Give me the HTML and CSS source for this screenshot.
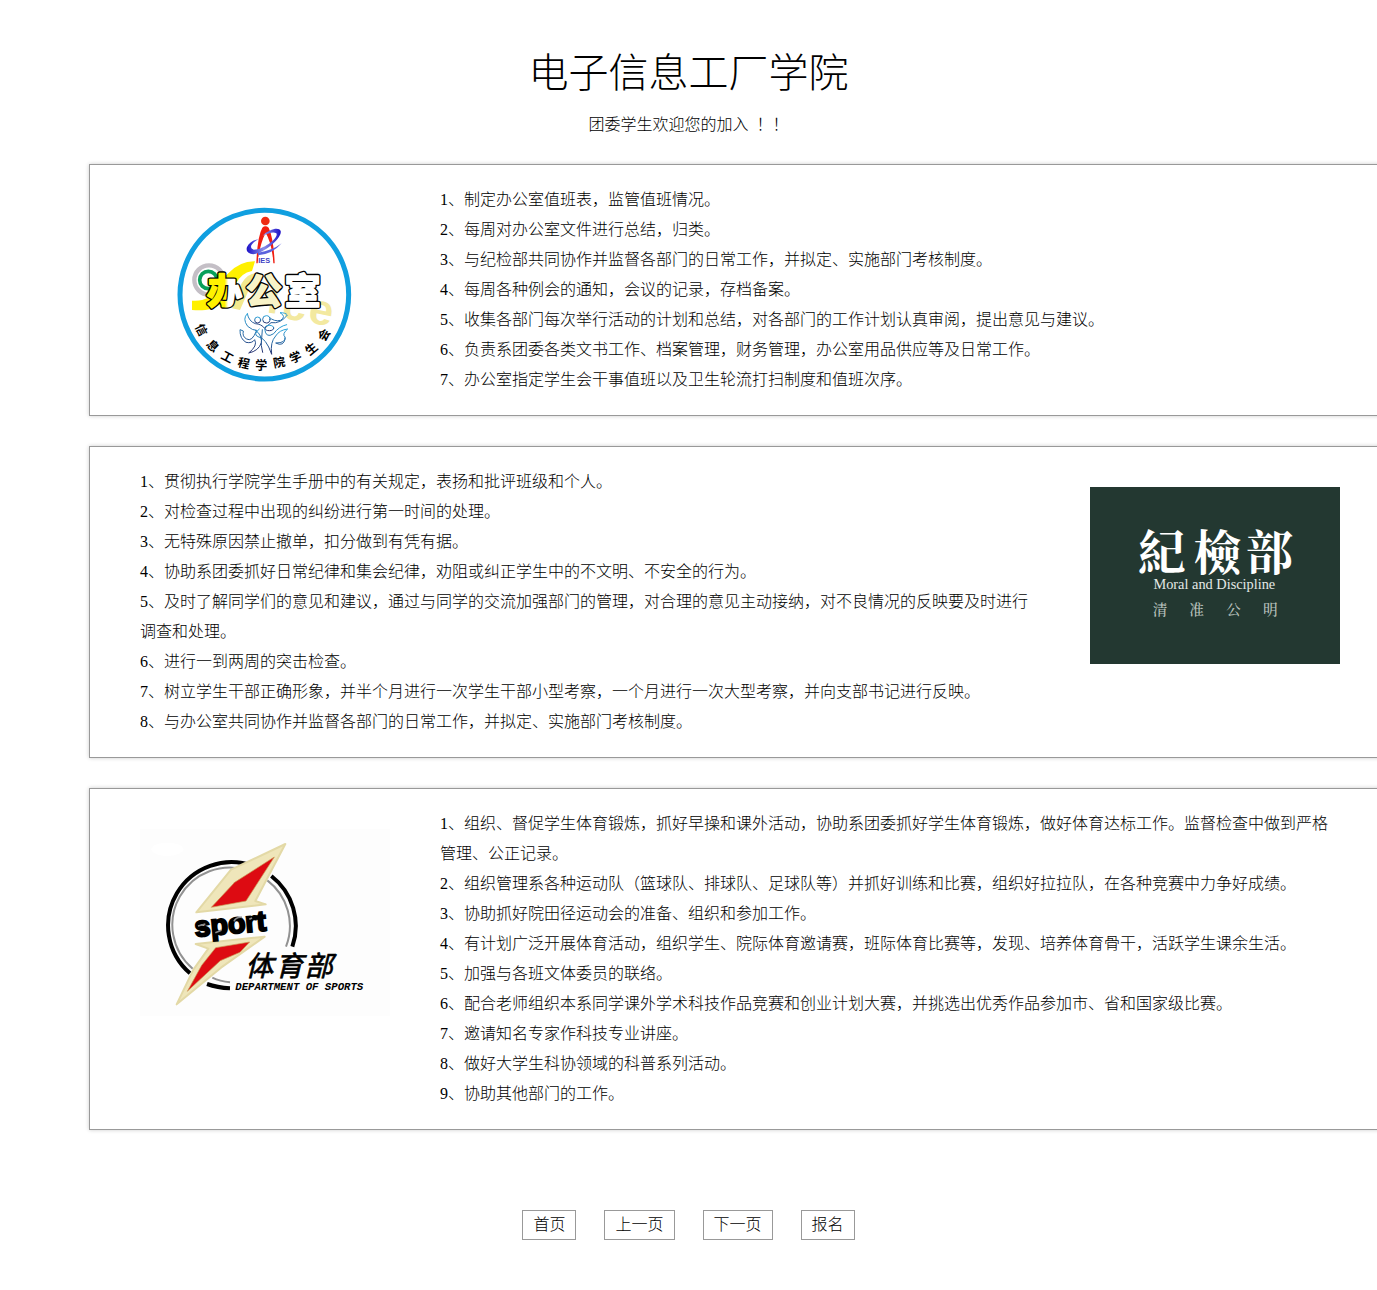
FILE: index.html
```html
<!DOCTYPE html>
<html lang="zh-CN">
<head>
    <meta charset="UTF-8">
    <meta name="viewport" content="width=device-width, initial-scale=1.0">
    <title>电子信息工厂学院</title>
    <link rel="stylesheet" href="styles.css">
</head>
<body>
    <header class="header">
        <h1>电子信息工厂学院</h1>
        <p>团委学生欢迎您的加入&nbsp; ！！</p>
    </header>

    <main class="main">
        <section class="box">
            <svg class="logo" viewBox="-60 30 750 570" role="img" aria-label="办公室">
                <defs>
                    <linearGradient id="ban" x1="0" x2="1">
                        <stop offset="0.5" stop-color="#fff200"/>
                        <stop offset="0.6" stop-color="#ffffff"/>
                    </linearGradient>
                    <linearGradient id="people" x1="0" y1="0" x2="0" y2="1">
                        <stop offset="0" stop-color="#2aa5dc"/>
                        <stop offset="1" stop-color="#26306f"/>
                    </linearGradient>
                    <linearGradient id="orbit" x1="0" x2="1">
                        <stop offset="0" stop-color="#1c10c8"/>
                        <stop offset="0.5" stop-color="#8b8fe8"/>
                        <stop offset="1" stop-color="#1c10c8"/>
                    </linearGradient>
                </defs>
                <circle cx="313" cy="299" r="253" fill="#fff" stroke="#109fe0" stroke-width="15"/>
                <!-- Office -->
                <path d="M96 317C170 322 165 270 205 235Q240 198 285 199L276 228Q243 233 225 270C200 325 165 352 96 345Z" fill="#fff000"/>
                <path d="M245 265Q268 225 308 236L302 256Q278 252 266 286L240 345L216 340Z" fill="#f3e98e"/>
                <g class="office">
                    <text x="318" y="352" transform="rotate(8 318 352)">i</text>
                    <text x="362" y="368" transform="rotate(10 362 368)">c</text>
                    <text x="440" y="380" transform="rotate(12 440 380)">e</text>
                </g>
                <circle cx="147" cy="255" r="44" fill="none" stroke="#c4bfc6" stroke-width="13"/>
                <circle cx="145" cy="255" r="26" fill="none" stroke="#08a05a" stroke-width="11"/>
                <!-- IES -->
                <circle cx="316" cy="78" r="13" fill="#ee2a12"/>
                <path d="M289 205Q292 125 307 98Q316 90 326 98Q341 130 344 205H340Q336 145 317 113Q298 150 293 205Z" fill="#f01d10"/>
                <path d="M308 122C330 101 357 96 362 108C366 125 329 161 293 175C275 182 255 174 261 156C267 143 280 135 295 133C273 145 266 158 281 164C310 165 358 128 349 115C342 109 327 113 308 122Z" fill="url(#orbit)"/>
                <path d="M294 173Q337 167 365 145Q337 178 294 181Z" fill="#5a62dd"/>
                <rect x="294" y="187" width="44" height="18" fill="#fff"/>
                <text class="ies" x="295" y="204">IES</text>
                <g class="office-name">
                    <g class="edge">
                        <text x="141" y="328">办</text>
                        <text x="259" y="328">公</text>
                        <text x="375" y="328">室</text>
                    </g>
                    <g class="face">
                        <text x="141" y="328" fill="url(#ban)" stroke="url(#ban)">办</text>
                        <text x="259" y="328" fill="#f8f3c8" stroke="#f8f3c8">公</text>
                        <text x="375" y="328" fill="#fff" stroke="#fff">室</text>
                    </g>
                </g>
                <g fill="none" stroke="url(#people)" stroke-width="3" stroke-linecap="round" stroke-linejoin="round">
                    <path d="M262 356Q246 371 263 394Q279 407 290 406Q276 442 260 432Q246 425 250 408L240 404Q239 431 258 442Q276 446 284 434Q294 452 266 474Q296 468 304 443L307 404"/>
                    <path d="M262 356Q266 379 286 386Q304 387 314 400L333 383Q362 387 382 360Q377 353 360 353Q380 364 362 376Q343 381 328 367"/>
                    <circle cx="293" cy="375" r="9"/>
                    <circle cx="319" cy="373" r="11"/>
                    <ellipse cx="328" cy="399" rx="13" ry="8"/>
                    <path d="M298 402Q278 418 294 425Q318 428 335 478Q330 441 347 423Q358 405 383 402Q365 417 375 426Q378 444 347 444Q372 457 376 429"/>
                    <path d="M286 406Q308 418 304 452L308 472M314 402Q317 432 341 416Q357 394 380 389"/>
                </g>
                <g class="ring-text">
                    <text transform="translate(127 403) rotate(63)">信</text>
                    <text transform="translate(161 450) rotate(45)">息</text>
                    <text transform="translate(204 483) rotate(28)">工</text>
                    <text transform="translate(252 501) rotate(12)">程</text>
                    <text transform="translate(304 507)">学</text>
                    <text transform="translate(357 499) rotate(-10)">院</text>
                    <text transform="translate(405 484) rotate(-24)">学</text>
                    <text transform="translate(452 459) rotate(-40)">生</text>
                    <text transform="translate(489 418) rotate(-58)">会</text>
                </g>
            </svg>
            <div class="text">
                <p>1、制定办公室值班表，监管值班情况。</p>
                <p>2、每周对办公室文件进行总结，归类。</p>
                <p>3、与纪检部共同协作并监督各部门的日常工作，并拟定、实施部门考核制度。</p>
                <p>4、每周各种例会的通知，会议的记录，存档备案。</p>
                <p>5、收集各部门每次举行活动的计划和总结，对各部门的工作计划认真审阅，提出意见与建议。</p>
                <p>6、负责系团委各类文书工作、档案管理，财务管理，办公室用品供应等及日常工作。</p>
                <p>7、办公室指定学生会干事值班以及卫生轮流打扫制度和值班次序。</p>
            </div>
        </section>

        <section class="box">
            <div class="text">
                <p>1、贯彻执行学院学生手册中的有关规定，表扬和批评班级和个人。</p>
                <p>2、对检查过程中出现的纠纷进行第一时间的处理。</p>
                <p>3、无特殊原因禁止撤单，扣分做到有凭有据。</p>
                <p>4、协助系团委抓好日常纪律和集会纪律，劝阻或纠正学生中的不文明、不安全的行为。</p>
                <p>5、及时了解同学们的意见和建议，通过与同学的交流加强部门的管理，对合理的意见主动接纳，对不良情况的反映要及时进行调查和处理。</p>
                <p>6、进行一到两周的突击检查。</p>
                <p>7、树立学生干部正确形象，并半个月进行一次学生干部小型考察，一个月进行一次大型考察，并向支部书记进行反映。</p>
                <p>8、与办公室共同协作并监督各部门的日常工作，并拟定、实施部门考核制度。</p>
            </div>
            <svg class="logo" viewBox="30 21 750 531" role="img" aria-label="紀檢部">
                <rect x="30" y="21" width="750" height="531" fill="#233831"/>
                <g class="moral-name">
                    <text x="246" y="270">紀</text>
                    <text x="412" y="270">檢</text>
                    <text x="568" y="270">部</text>
                </g>
                <text class="moral-en" x="403" y="328">Moral and Discipline</text>
                <g class="moral-motto">
                    <text x="240" y="405">清</text>
                    <text x="350" y="405">准</text>
                    <text x="461" y="405">公</text>
                    <text x="571" y="405">明</text>
                </g>
            </svg>
        </section>

        <section class="box">
            <svg class="logo" viewBox="30 27 750 561" role="img" aria-label="体育部">
                <rect x="30" y="27" width="750" height="561" fill="#fdfdfd"/>
                <ellipse cx="112" cy="88" rx="48" ry="20" fill="#fff"/>
                <path d="M370 138A190 190 0 0 0 180 460M231 492Q262 503 300 505M424 168A190 190 0 0 1 487 380" fill="none" stroke="#000" stroke-width="12"/>
                <path d="M355 152A172 172 0 0 0 188 446M247 473Q270 484 300 487M412 181A172 172 0 0 1 468 380" fill="none" stroke="#929292" stroke-width="6"/>
                <path d="M466 72L376 243L407 253L199 277L303 149Z" fill="#efe6ba" stroke="#e3d9a6" stroke-width="6" stroke-linejoin="round"/>
                <path d="M433 111L348 243L244 262L314 187Z" fill="#dd0b12" stroke="#c99a55" stroke-width="2"/>
                <path d="M197 372L404 350L273 443L140 553L190 449L235 386Z" fill="#efe6ba" stroke="#e3d9a6" stroke-width="6" stroke-linejoin="round"/>
                <path d="M359 366L257 383L215 436L172 514L271 422L330 397Z" fill="#dd0b12" stroke="#c99a55" stroke-width="2"/>
                <text class="sport" x="196" y="350" transform="rotate(-5 196 350)">sport</text>
                <path d="M204 318L226 312M256 338L274 331M312 304Q318 290 336 292M358 298L366 294" fill="none" stroke="#8a8a8a" stroke-width="5"/>
                <g class="sports-name">
                    <text x="388" y="469">体</text>
                    <text x="478" y="469">育</text>
                    <text x="566" y="469">部</text>
                </g>
                <text class="sports-en" x="316" y="510">DEPARTMENT OF SPORTS</text>
            </svg>
            <div class="text">
                <p>1、组织、督促学生体育锻炼，抓好早操和课外活动，协助系团委抓好学生体育锻炼，做好体育达标工作。监督检查中做到严格管理、公正记录。</p>
                <p>2、组织管理系各种运动队（篮球队、排球队、足球队等）并抓好训练和比赛，组织好拉拉队，在各种竞赛中力争好成绩。</p>
                <p>3、协助抓好院田径运动会的准备、组织和参加工作。</p>
                <p>4、有计划广泛开展体育活动，组织学生、院际体育邀请赛，班际体育比赛等，发现、培养体育骨干，活跃学生课余生活。</p>
                <p>5、加强与各班文体委员的联络。</p>
                <p>6、配合老师组织本系同学课外学术科技作品竞赛和创业计划大赛，并挑选出优秀作品参加市、省和国家级比赛。</p>
                <p>7、邀请知名专家作科技专业讲座。</p>
                <p>8、做好大学生科协领域的科普系列活动。</p>
                <p>9、协助其他部门的工作。</p>
            </div>
        </section>
    </main>

    <nav class="page">
        <a href="#">首页</a>
        <a href="#">上一页</a>
        <a href="#">下一页</a>
        <a href="#">报名</a>
    </nav>
</body>
</html>
```
FILE: styles.css
```css
* {
    margin: 0;
    padding: 0;
    box-sizing: border-box;
}
body {
    background-color: #fff;
    color: #000;
    font-family: "Liberation Serif", "Noto Sans CJK SC", serif;
    font-size: 16px;
    font-weight: 300;
    line-height: 30px;
    text-spacing-trim: space-all;
    overflow-x: hidden;
}
.header {
    padding-top: 44px;
    text-align: center;
}
.header h1 {
    font-size: 40px;
    font-weight: 300;
    line-height: 60px;
    margin-bottom: 6px;
}
.main {
    display: flex;
    flex-direction: column;
    gap: 30px;
    /* the boxes run past the right side of the window */
    margin: 24px -14px 0 89px;
}
.box {
    display: flex;
    align-items: flex-start;
    gap: 50px;
    padding: 20px 50px;
    border: 1px solid #999;
    box-shadow: 0 0 4px #ccc;
}
.text {
    flex: 1;
}
.logo {
    display: block;
    width: 250px;
    flex-shrink: 0;
    margin-top: 20px;
}
.page {
    display: flex;
    justify-content: center;
    gap: 28px;
    margin: 80px 0 50px;
}
.page a {
    padding: 0 10px;
    border: 1px solid #999;
    color: #000;
    line-height: 28px;
    text-decoration: none;
}
.page a:hover {
    background-color: #eee;
}

/* office logo */
.office {
    font-family: "Liberation Sans", sans-serif;
    font-size: 130px;
    font-weight: bold;
    fill: #f3e9a0;
}
.ies {
    font-family: "Liberation Sans", sans-serif;
    font-size: 22px;
    font-weight: bold;
    fill: #3f3fc4;
}
.office-name {
    font-family: "Noto Sans CJK SC", sans-serif;
    font-size: 106px;
    font-weight: bold;
    stroke-linejoin: round;
}
.edge {
    fill: #000;
    stroke: #000;
    stroke-width: 14px;
}
.face {
    stroke-width: 6px;
}
.ring-text {
    font-family: "Noto Sans CJK SC", sans-serif;
    font-size: 36px;
    font-weight: bold;
    text-anchor: middle;
    dominant-baseline: central;
}

/* discipline logo */
.moral-name,
.moral-motto {
    font-family: "Noto Serif CJK SC", "Noto Sans CJK TC", serif;
    text-anchor: middle;
}
.moral-name {
    font-size: 142px;
    font-weight: bold;
    fill: #fff;
}
.moral-en {
    font-family: "Liberation Serif", serif;
    font-size: 43px;
    text-anchor: middle;
    fill: #e4e9e6;
}
.moral-motto {
    font-size: 44px;
    font-weight: 500;
    fill: #b9c2bd;
}

/* sports logo */
.sport {
    font-family: "Liberation Sans", sans-serif;
    font-size: 86px;
    font-weight: bold;
    stroke: #000;
    stroke-width: 6px;
}
.sports-name {
    font-family: "Noto Sans CJK SC", sans-serif;
    font-size: 84px;
    font-weight: 400;
    font-style: italic;
    text-anchor: middle;
    stroke: #000;
    stroke-width: 2px;
}
.sports-en {
    font-family: "Liberation Mono", monospace;
    font-size: 32px;
    font-weight: bold;
    font-style: italic;
}
```
